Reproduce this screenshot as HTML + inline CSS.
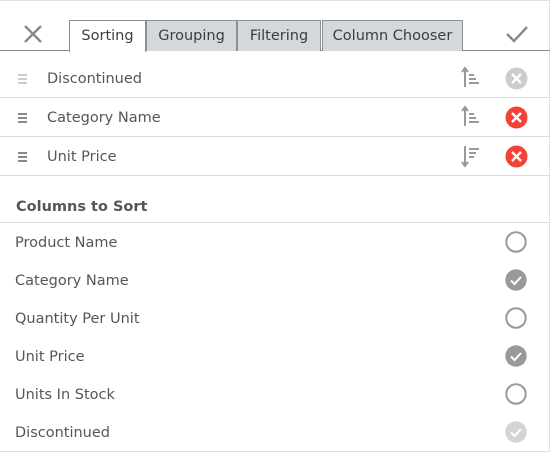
<!DOCTYPE html>
<html><head><style>
*{margin:0;padding:0;box-sizing:border-box}
body{width:550px;height:452px;background:#fff;font-family:"DejaVu Sans",Verdana,sans-serif;font-size:14.5px;color:#5a5550;position:relative;overflow:hidden}
.frame{position:absolute;left:0;top:0;width:550px;height:452px;border:1px solid #e0e0e0;border-left:none}
.tabline{position:absolute;left:0;top:50px;width:550px;height:1px;background:#8a8f96}
.tab{position:absolute;top:20px;height:31px;border:1px solid #8a8f96;border-bottom:none;background:#d4d7dc;line-height:31px;text-align:center;font-size:14.5px;color:#3c3c44}
.tab.act{background:#fff;height:32px;z-index:2}
.row{position:absolute;left:0;width:550px;height:39px;border-bottom:1px solid #ddd}
.row .t{position:absolute;left:47px;top:1px;line-height:38px}
.grip{position:absolute;left:18px;top:14px;width:9px}
.grip i{display:block;height:2px;margin-bottom:2px;background:#888}
.sep{position:absolute;left:0;width:550px;height:1px;background:#ddd}
.item{position:absolute;left:15px;line-height:20px}
svg{position:absolute}
</style></head><body>
<div class="frame"></div>
<svg style="left:23px;top:24px" width="20" height="20"><path d="M2 2L18 18M18 2L2 18" stroke="#888" stroke-width="2.4"/></svg>
<svg style="left:505px;top:25px" width="24" height="18"><path d="M2 9L9 16L22 2" stroke="#888" stroke-width="2.4" fill="none"/></svg>
<div class="tabline"></div>
<div class="tab act" style="left:69px;width:77px">Sorting</div>
<div class="tab" style="left:146px;width:91px">Grouping</div>
<div class="tab" style="left:237px;width:84px">Filtering</div>
<div class="tab" style="left:322px;width:141px">Column Chooser</div>

<div class="row" style="top:59px"><div class="grip" style="top:15px"><i style="background:#ccc"></i><i style="background:#ccc"></i><i style="background:#ccc"></i></div><div class="t">Discontinued</div></div>
<div class="row" style="top:98px"><div class="grip" style="top:15px"><i></i><i></i><i></i></div><div class="t">Category Name</div></div>
<div class="row" style="top:137px"><div class="grip" style="top:15px"><i></i><i></i><i></i></div><div class="t">Unit Price</div></div>

<svg style="left:460px;top:66px" width="26" height="24"><path d="M5 3V21M2 6L5 2L8 6" stroke="#999" stroke-width="2" fill="none"/><path d="M9 9h5M9 13h7M9 17h10" stroke="#999" stroke-width="2"/></svg>
<svg style="left:460px;top:105px" width="26" height="24"><path d="M5 3V21M2 6L5 2L8 6" stroke="#999" stroke-width="2" fill="none"/><path d="M9 9h5M9 13h7M9 17h10" stroke="#999" stroke-width="2"/></svg>
<svg style="left:460px;top:145px" width="26" height="24"><path d="M5 1V20M2 17L5 21L8 17" stroke="#999" stroke-width="2" fill="none"/><path d="M9 4h10M9 8h7M9 12h5" stroke="#999" stroke-width="2"/></svg>

<svg style="left:505px;top:67px" width="23" height="23"><circle cx="11.5" cy="11.5" r="11" fill="#ccc"/><path d="M7 7L16 16M16 7L7 16" stroke="#fff" stroke-width="2.4"/></svg>
<svg style="left:505px;top:106px" width="23" height="23"><circle cx="11.5" cy="11.5" r="11" fill="#f44336"/><path d="M7 7L16 16M16 7L7 16" stroke="#fff" stroke-width="2.4"/></svg>
<svg style="left:505px;top:145px" width="23" height="23"><circle cx="11.5" cy="11.5" r="11" fill="#f44336"/><path d="M7 7L16 16M16 7L7 16" stroke="#fff" stroke-width="2.4"/></svg>

<div class="item" style="top:197px;left:16px;font-weight:bold">Columns to Sort</div>
<div class="sep" style="top:222px"></div>

<div class="item" style="top:233px">Product Name</div>
<div class="item" style="top:271px">Category Name</div>
<div class="item" style="top:309px">Quantity Per Unit</div>
<div class="item" style="top:347px">Unit Price</div>
<div class="item" style="top:385px">Units In Stock</div>
<div class="item" style="top:423px">Discontinued</div>

<svg style="left:505px;top:231px" width="22" height="22"><circle cx="11" cy="11" r="9.7" fill="none" stroke="#999" stroke-width="2"/></svg>
<svg style="left:505px;top:269px" width="22" height="22"><circle cx="11" cy="11" r="10.7" fill="#999"/><path d="M6 11.5L9.5 15L16 8" stroke="#fff" stroke-width="2" fill="none"/></svg>
<svg style="left:505px;top:307px" width="22" height="22"><circle cx="11" cy="11" r="9.7" fill="none" stroke="#999" stroke-width="2"/></svg>
<svg style="left:505px;top:345px" width="22" height="22"><circle cx="11" cy="11" r="10.7" fill="#999"/><path d="M6 11.5L9.5 15L16 8" stroke="#fff" stroke-width="2" fill="none"/></svg>
<svg style="left:505px;top:383px" width="22" height="22"><circle cx="11" cy="11" r="9.7" fill="none" stroke="#999" stroke-width="2"/></svg>
<svg style="left:505px;top:421px" width="22" height="22"><circle cx="11" cy="11" r="10.7" fill="#d4d4d4"/><path d="M6 11.5L9.5 15L16 8" stroke="#fff" stroke-width="2" fill="none"/></svg>
</body></html>
